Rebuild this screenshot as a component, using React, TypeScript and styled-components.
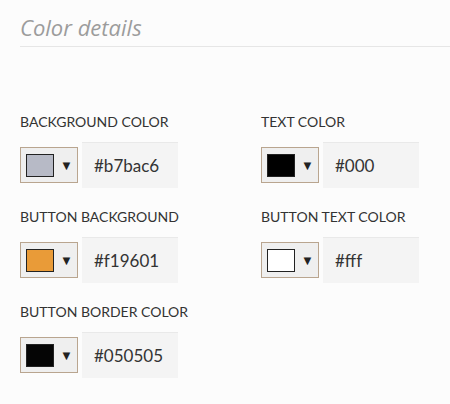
import React, {useState} from 'react'
import styled, {createGlobalStyle} from 'styled-components'

const GlobalStyle = createGlobalStyle`
  body {
    margin: 0;
    background: #fcfcfc;
    font-family: Lato, "Open Sans", sans-serif;
  }
`

type FieldType = {
    label: string
    value: string
    swatch: string
}

const fields: FieldType[] = [
    {label: 'Background color', value: '#b7bac6', swatch: '#b7bac6'},
    {label: 'Text color', value: '#000', swatch: '#000'},
    {label: 'Button background', value: '#f19601', swatch: '#e99b38'},
    {label: 'Button text color', value: '#fff', swatch: '#fff'},
    {label: 'Button border color', value: '#050505', swatch: '#050505'},
]

const Wrapper = styled.div`
  padding: 14px 0 20px 20px;
`

const Title = styled.h2`
  margin: 0;
  padding-bottom: 6px;
  border-bottom: 1px solid #e6e6e6;
  font-family: "Open Sans", Lato, sans-serif;
  font-size: 22px;
  line-height: 26px;
  font-weight: 400;
  font-style: italic;
  color: #9c9c9c;
`

const Grid = styled.div`
  display: grid;
  grid-template-columns: 241px 1fr;
  row-gap: 20px;
  margin-top: 66px;
`

const Field = styled.div`
  display: flex;
  flex-direction: column;
`

const Label = styled.label`
  font-size: 14px;
  line-height: 18px;
  text-transform: uppercase;
  color: #333;
  margin-bottom: 11px;
`

const Controls = styled.div`
  display: flex;
  align-items: center;
  gap: 4px;
`

const SwatchButton = styled.button`
  display: flex;
  align-items: center;
  box-sizing: border-box;
  width: 58px;
  height: 36px;
  padding: 0 0 0 5px;
  border: 1px solid #b9a58f;
  background: #efefef;
  cursor: pointer;
`

const Swatch = styled.span<{ color: string }>`
  display: block;
  box-sizing: border-box;
  width: 28px;
  height: 23px;
  border: 1px solid #222;
  background: ${props => props.color};
`

const Arrow = styled.span`
  margin-left: 6px;
  font-size: 13px;
  line-height: 1;
  color: #222;
`

const HexInput = styled.input`
  box-sizing: border-box;
  width: 96px;
  height: 46px;
  padding: 0 0 0 12px;
  border: none;
  border-top: 1px solid #e9e9e9;
  background: #f4f4f4;
  font-family: inherit;
  font-size: 17px;
  color: #333;
  outline: none;
`

const ColorField = ({label, value, swatch}: FieldType) => {
    const [color, setColor] = useState(value)
    return (
        <Field>
            <Label>{label}</Label>
            <Controls>
                <SwatchButton type="button">
                    <Swatch color={color === value ? swatch : color}/>
                    <Arrow>▼</Arrow>
                </SwatchButton>
                <HexInput value={color} onChange={e => setColor(e.currentTarget.value)}/>
            </Controls>
        </Field>
    )
}

export default function App() {
    return (
        <Wrapper>
            <GlobalStyle/>
            <Title>Color details</Title>
            <Grid>
                {fields.map(f => <ColorField key={f.label} {...f}/>)}
            </Grid>
        </Wrapper>
    )
}
